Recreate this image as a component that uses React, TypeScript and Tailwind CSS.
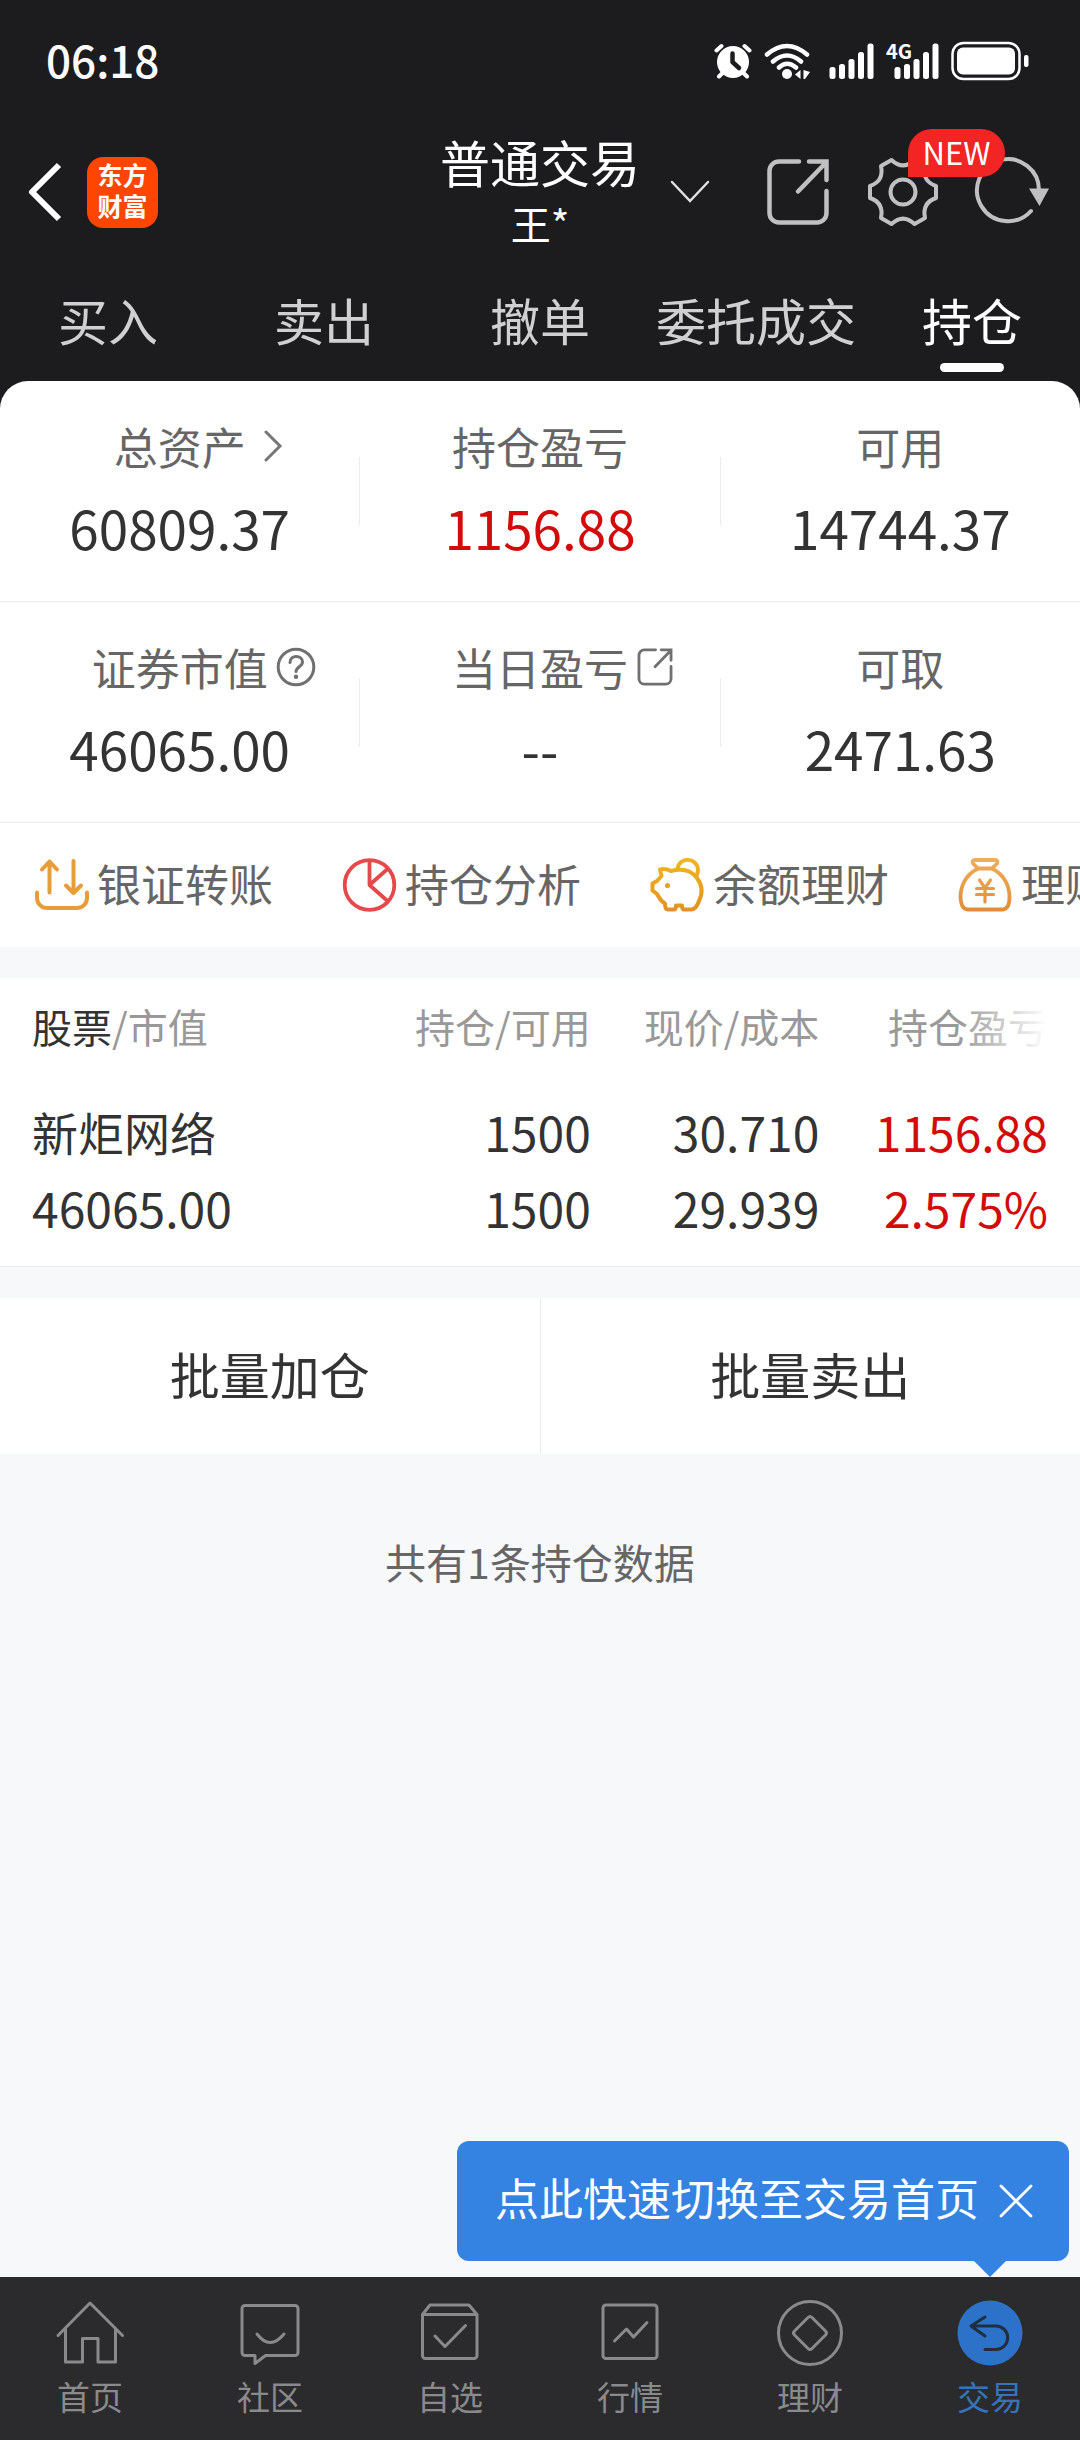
import { useState } from "react";
import type { ReactNode } from "react";

const tabs = ["买入", "卖出", "撤单", "委托成交", "持仓"];

const holdings = [
  {
    name: "新炬网络",
    marketValue: "46065.00",
    position: "1500",
    available: "1500",
    price: "30.710",
    cost: "29.939",
    profit: "1156.88",
    profitRate: "2.575%",
  },
];

/* ---------- Status bar icons ---------- */

const AlarmIcon = () => (
  <svg className="h-9 w-[38px]" viewBox="0 0 38 36" fill="none" strokeLinecap="round">
    <circle cx="19" cy="19" r="16" fill="#fff" />
    <path d="M2.5 7.5 7.5 3M35.5 7.5 30.5 3M5 33.5l4-4M33 33.5l-4-4" stroke="#fff" strokeWidth="4" />
    <path d="M18.5 10.5V19l6.5 6" stroke="#1c1c1e" strokeWidth="4.5" strokeLinejoin="round" />
  </svg>
);

const WifiIcon = () => (
  <svg className="h-9 w-12" viewBox="0 0 48 36" fill="none">
    <path
      d="M4 11.5Q24-5.5 44 11.5M10 18.5Q24 6.5 38 18.5M16 24.5Q24 17 33 24.5"
      stroke="#fff"
      strokeWidth="4.5"
      strokeLinecap="round"
    />
    <circle cx="24" cy="31" r="5" fill="#fff" />
    <path d="M32 31.5 37.5 27v9zM40.5 27l6.500 2-5 7h-1.500z" fill="#fff" />
  </svg>
);

const SignalIcon = () => (
  <svg className="h-9 w-[45px]" viewBox="0 0 45 36" fill="#fff">
    <rect x="0.5" y="24" width="6" height="12" rx="2.5" />
    <rect x="10" y="21" width="6" height="15" rx="2.5" />
    <rect x="19.5" y="16" width="6" height="20" rx="2.5" />
    <rect x="29" y="9" width="6" height="27" rx="2.5" />
    <rect x="38.5" y="0.5" width="6" height="35.5" rx="2.5" />
  </svg>
);

const BatteryIcon = () => (
  <svg className="h-10 w-[78px]" viewBox="0 0 78 40" fill="none">
    <rect x="1.5" y="2" width="67" height="36" rx="11" stroke="#fff" strokeWidth="2.5" />
    <rect x="6" y="6.5" width="58" height="27" rx="6" fill="#fff" />
    <rect x="73" y="14" width="4.5" height="12" rx="2" fill="#fff" />
  </svg>
);

/* ---------- Header icons ---------- */

const ShareIcon = ({ className, strokeWidth }: { className: string; strokeWidth: number }) => (
  <svg
    className={className}
    viewBox="0 0 64 70"
    fill="none"
    stroke="currentColor"
    strokeWidth={strokeWidth}
    strokeLinecap="round"
  >
    <path d="M33 4.5H13A9.5 9.5 0 0 0 3.5 14v42a9.5 9.5 0 0 0 9.5 9.5h38a9.5 9.5 0 0 0 9.5-9.5V34" />
    <path d="M43 4.5h17.5V23M32 34.5l28-29" />
  </svg>
);

const GearIcon = () => (
  <svg
    className="h-[72px] w-[72px]"
    viewBox="-36 -36 72 72"
    fill="none"
    stroke="currentColor"
    strokeWidth="4"
    strokeLinejoin="round"
  >
    <path d="M-33-6V6C-24 9-20 16-22 26L-11.5 32C-4 25 4 25 11.5 32L22 26C20 16 24 9 33 6V-6C24-9 20-16 22-26L11.5-32C4-25-4-25-11.5-32L-22-26C-20-16-24-9-33-6Z" />
    <circle r="12.5" />
  </svg>
);

const RefreshIcon = () => (
  <svg className="h-[72px] w-[76px]" viewBox="0 0 76 72" fill="none">
    <path d="M57 55A31 31 0 1 1 65 35" stroke="currentColor" strokeWidth="4" strokeLinecap="round" />
    <path d="M55 32.5h20L65.5 50z" fill="currentColor" />
  </svg>
);

/* ---------- Shortcuts ---------- */

const TransferIcon = () => (
  <svg
    className="h-[60px] w-[60px]"
    viewBox="0 0 60 60"
    fill="none"
    stroke="#e79d3c"
    strokeWidth="4"
    strokeLinecap="round"
    strokeLinejoin="round"
  >
    <path d="M17.5 37.5v-31M10 14.5l7.5-8 7.5 8M41.5 6v31.5M34 30.5l7.5 7.5 7.5-7.5" />
    <path d="M5 37.5V43a10 10 0 0 0 10 10h30a10 10 0 0 0 10-10v-5.5" />
  </svg>
);

const PieIcon = () => (
  <svg
    className="h-[60px] w-[60px]"
    viewBox="0 0 60 60"
    fill="none"
    stroke="#e54a4b"
    strokeWidth="3.8"
    strokeLinejoin="round"
  >
    <circle cx="29.5" cy="30" r="24.8" />
    <path d="M29.5 5.5V30l18-16M29.5 30l18 16" />
  </svg>
);

const PiggyIcon = () => (
  <svg
    className="h-[60px] w-[60px]"
    viewBox="0 0 60 60"
    fill="none"
    stroke="url(#piggy)"
    strokeWidth="4"
    strokeLinejoin="round"
  >
    <defs>
      <linearGradient id="piggy" x1="0" y1="0" x2="0" y2="60" gradientUnits="userSpaceOnUse">
        <stop offset="0" stopColor="#f0b822" />
        <stop offset="1" stopColor="#e18f24" />
      </linearGradient>
    </defs>
    <path d="M12 14.5Q17 13 23 16C33 13.5 43 15 49 23 55 31 54.5 39 51 46Q48 54.5 43 54.5H36Q34 54.5 34 50.5H28Q28 54.5 26 54.5H20Q17 54.5 17 48.5C12 46 11 42 9 39L4.5 35.5V28.5L9 26 13.5 21Z" />
    <path d="M29.5 14C31 1.5 49 2 50 14.5Q50 18 48.5 21" />
    <circle cx="19.5" cy="30.5" r="2.6" fill="#e6a422" stroke="none" />
  </svg>
);

const MoneyBagIcon = () => (
  <svg
    className="h-[60px] w-[60px]"
    viewBox="0 0 60 60"
    fill="none"
    stroke="url(#bag)"
    strokeWidth="3.8"
    strokeLinecap="round"
    strokeLinejoin="round"
  >
    <defs>
      <linearGradient id="bag" x1="0" y1="0" x2="0" y2="60" gradientUnits="userSpaceOnUse">
        <stop offset="0" stopColor="#efb05c" />
        <stop offset="1" stopColor="#e28a35" />
      </linearGradient>
    </defs>
    <path d="M22 13.5 17 8.5Q15.5 5 19 5H39Q42.5 5 41 8.5L36 13.5Z" />
    <path d="M22 13.5C9 20 4.5 32 4.5 42Q5 54.5 12 54.5H46Q53.5 54.5 53.5 42C53.5 32 49 20 36 13.5" />
    <path d="M23.5 25l5.5 8 5.5-8M29 33v14M20.5 33.5h17M20.5 39.5h17" strokeWidth="3.2" />
  </svg>
);

const shortcuts = [
  { label: "银证转账", icon: <TransferIcon /> },
  { label: "持仓分析", icon: <PieIcon /> },
  { label: "余额理财", icon: <PiggyIcon /> },
  { label: "理财", icon: <MoneyBagIcon /> },
];

/* ---------- Bottom navigation ---------- */

const NavIcon = ({ children }: { children: ReactNode }) => (
  <svg
    className="h-[72px] w-[72px]"
    viewBox="0 0 72 72"
    fill="none"
    stroke="currentColor"
    strokeWidth="3"
    strokeLinecap="round"
    strokeLinejoin="round"
  >
    {children}
  </svg>
);

const navItems = [
  {
    label: "首页",
    icon: <path d="M4 38.5 36 6l32.5 32.5M11.5 32v33h17V41.5H44V65h17.5V32" />,
  },
  {
    label: "社区",
    icon: (
      <>
        <path d="M11 8.5h50a3 3 0 0 1 3 3v44a3 3 0 0 1-3 3H31.5L21 66.5v-8H11a3 3 0 0 1-3-3v-44a3 3 0 0 1 3-3z" />
        <path d="M23 37q13 17 27 0" />
      </>
    ),
  },
  {
    label: "自选",
    icon: (
      <>
        <path d="M8.5 17.5 16 8h39l8 9.5v41a3 3 0 0 1-3 3H11.5a3 3 0 0 1-3-3zM8.5 17.5H63" />
        <path d="m21 39 10 10.5 20.5-21" />
      </>
    ),
  },
  {
    label: "行情",
    icon: (
      <>
        <rect x="9" y="8" width="54" height="53.5" rx="3" />
        <path d="m20.5 44 12-12 7 8L53 25.5" />
      </>
    ),
  },
  {
    label: "理财",
    icon: (
      <>
        <circle cx="36" cy="36" r="31.5" />
        <path d="M34 20.5q2-2 4 0L51.5 34q2 2 0 4L38 51.5q-2 2-4 0L20.5 38q-2-2 0-4z" />
      </>
    ),
  },
  {
    label: "交易",
    icon: (
      <>
        <circle cx="36" cy="36" r="32.5" fill="#2b72c8" stroke="none" />
        <path d="M31 20 17 29l14 10M17.5 29H42a11.7 11.7 0 0 1 0 23.4H31" stroke="#202e3f" />
      </>
    ),
  },
];

type StatProps = {
  label: string;
  value: string;
  red?: boolean;
  children?: ReactNode;
};

const Stat = ({ label, value, red, children }: StatProps) => (
  <div className="flex-1 pt-[35px] pb-[38px]">
    <div className="grid grid-cols-[1fr_auto_1fr] items-center">
      <span className="col-start-2 text-[44px] leading-[60px] text-[#666]">{label}</span>
      {children}
    </div>
    <div className={`mt-[15px] text-center text-[53px] leading-[72px] ${red ? "text-[#d40b0b]" : "text-[#333]"}`}>
      {value}
    </div>
  </div>
);

const StatDivider = () => <span className="h-[69px] w-px self-center bg-[#ececec]" />;

export default function App() {
  const [activeTab, setActiveTab] = useState("持仓");
  const [activeNav, setActiveNav] = useState("交易");
  const [showTip, setShowTip] = useState(true);

  return (
    <div
      lang="zh-CN"
      className="flex min-h-screen flex-col overflow-x-hidden bg-[#f6f8fa] font-['Noto_Sans_CJK_SC',sans-serif] text-[#333]"
    >
      <header className="bg-[#1c1c1e] text-white">
        {/* Status bar */}
        <div className="flex h-[122px] items-center justify-between pr-[51px] pl-[46px]">
          <span className="pb-1 text-[44px] leading-[60px] font-medium">06:18</span>
          <div className="flex items-center">
            <AlarmIcon />
            <span className="ml-[11px]">
              <WifiIcon />
            </span>
            <span className="ml-[18px]">
              <SignalIcon />
            </span>
            <span className="relative ml-3 pl-2">
              <SignalIcon />
              <span className="absolute -top-1 left-0 text-[20px] leading-6 font-bold">4G</span>
            </span>
            <span className="ml-3">
              <BatteryIcon />
            </span>
          </div>
        </div>

        {/* Account bar */}
        <div className="grid h-[140px] grid-cols-[1fr_auto_1fr] items-center">
          <div className="flex items-center gap-[23px] pl-6">
            <button type="button" aria-label="返回">
              <svg className="h-[60px] w-10" viewBox="0 0 40 60" fill="none" stroke="#fff" strokeWidth="6">
                <path d="M35 3 8 30l27 27" strokeLinejoin="round" />
              </svg>
            </button>
            <div className="flex h-[71px] w-[71px] items-center justify-center rounded-2xl bg-[#ff4500] pb-1 text-center text-[25px] leading-[31px] font-bold">
              东方
              <br />
              财富
            </div>
          </div>
          <div className="text-center">
            <h1 className="text-[50px] leading-[62px]">普通交易</h1>
            <p className="text-[40px] leading-[62px]">王*</p>
          </div>
          <div className="flex items-center pl-[30px] text-[#c0c0c0]">
            <button type="button" aria-label="切换账户">
              <svg
                className="h-6 w-10"
                viewBox="0 0 40 24"
                fill="none"
                stroke="#e0e0e0"
                strokeWidth="2.5"
                strokeLinecap="round"
              >
                <path d="M2 2l18 19L38 2" />
              </svg>
            </button>
            <button type="button" aria-label="分享" className="ml-14">
              <ShareIcon className="h-[70px] w-16" strokeWidth={4.5} />
            </button>
            <button type="button" aria-label="设置" className="relative z-10 ml-[37px]">
              <GearIcon />
              <span className="absolute -top-[27px] left-[41px] flex h-12 w-[97px] items-center justify-center rounded-3xl rounded-bl-none bg-[#f22424] pb-[3px] text-[31px] leading-10 text-white">
                NEW
              </span>
            </button>
            <button type="button" aria-label="刷新" className="ml-[35px]">
              <RefreshIcon />
            </button>
          </div>
        </div>

        {/* Trade tabs */}
        <nav className="flex">
          {tabs.map((tab) => (
            <button
              key={tab}
              type="button"
              onClick={() => setActiveTab(tab)}
              className={`flex flex-1 basis-0 flex-col items-center pt-[27px] pb-[9px] text-[50px] leading-[60px] whitespace-nowrap ${
                activeTab === tab ? "text-white" : "text-[#d0d0d0]"
              }`}
            >
              {tab}
              <span className={`mt-[14px] h-[9px] w-16 rounded-full ${activeTab === tab ? "bg-white" : ""}`} />
            </button>
          ))}
        </nav>
      </header>

      {/* Asset summary */}
      <section className="bg-[#1c1c1e]">
        <div className="rounded-t-[28px] bg-white">
          <div className="flex border-b border-[#ececec]">
            <Stat label="总资产" value="60809.37">
              <svg
                className="ml-[18px] h-8 w-5"
                viewBox="0 0 20 32"
                fill="none"
                stroke="#777"
                strokeWidth="3"
                strokeLinecap="round"
              >
                <path d="M2 2l14 14L2 30" />
              </svg>
            </Stat>
            <StatDivider />
            <Stat label="持仓盈亏" value="1156.88" red />
            <StatDivider />
            <Stat label="可用" value="14744.37" />
          </div>
          <div className="flex border-b border-[#ececec]">
            <Stat label="证券市值" value="46065.00">
              <svg
                className="ml-2 h-10 w-10"
                viewBox="0 0 40 40"
                fill="none"
                stroke="#707070"
                strokeWidth="3"
                strokeLinecap="round"
              >
                <circle cx="20" cy="20" r="17.8" />
                <path d="M14 15.5c0-8.5 12.5-7.5 12.5-.5 0 4.5-6.5 5-6.5 9.5" />
                <circle cx="20" cy="29.8" r="2.2" fill="#707070" stroke="none" />
              </svg>
            </Stat>
            <StatDivider />
            <Stat label="当日盈亏" value="--">
              <ShareIcon className="ml-[9px] h-10 w-9 text-[#707070]" strokeWidth={5} />
            </Stat>
            <StatDivider />
            <Stat label="可取" value="2471.63" />
          </div>
        </div>
      </section>

      {/* Shortcuts, scrolls sideways */}
      <section className="flex h-[124px] items-center gap-[67px] overflow-hidden bg-white pl-8">
        {shortcuts.map((item) => (
          <button key={item.label} type="button" className="flex shrink-0 items-center gap-[5px]">
            {item.icon}
            <span className="pb-1 text-[44px] leading-[60px] text-[#666]">{item.label}</span>
          </button>
        ))}
      </section>

      {/* Holdings */}
      <section className="mt-[31px] border-b border-[#ececec] bg-white px-8">
        <table className="w-full table-fixed text-right">
          <thead>
            <tr className="h-[100px] text-[40px] leading-[60px] whitespace-nowrap text-[#999]">
              <th className="w-[27.5%] pb-1 text-left font-normal">
                <span className="text-[#333]">股票</span>/市值
              </th>
              <th className="w-[27.5%] pb-1 font-normal">持仓/可用</th>
              <th className="w-[22.5%] pb-1 font-normal">现价/成本</th>
              <th className="relative w-[22.5%] pb-1 font-normal">
                持仓盈亏
                <span className="absolute inset-y-0 right-0 w-[90px] bg-gradient-to-r from-transparent to-white" />
              </th>
            </tr>
          </thead>
          <tbody>
            {holdings.map((item) => (
              <tr key={item.name} className="text-[48px] leading-[76px]">
                <td className="pt-[15px] pb-[21px] text-left">
                  <div className="text-[46px]">{item.name}</div>
                  <div>{item.marketValue}</div>
                </td>
                <td className="pt-[15px] pb-[21px]">
                  <div>{item.position}</div>
                  <div>{item.available}</div>
                </td>
                <td className="pt-[15px] pb-[21px]">
                  <div>{item.price}</div>
                  <div>{item.cost}</div>
                </td>
                <td className="pt-[15px] pb-[21px] text-[#d40b0b]">
                  <div>{item.profit}</div>
                  <div>{item.profitRate}</div>
                </td>
              </tr>
            ))}
          </tbody>
        </table>
      </section>

      <section className="mt-[31px] flex bg-white text-[50px] leading-[72px]">
        <button type="button" className="flex-1 border-r border-[#ececec] pt-[39px] pb-[45px]">
          批量加仓
        </button>
        <button type="button" className="flex-1 pt-[39px] pb-[45px]">
          批量卖出
        </button>
      </section>

      <p className="mt-[77px] text-center text-[41px] leading-[60px] text-[#666]">
        共有{holdings.length}条持仓数据
      </p>

      {/* Bottom navigation */}
      <footer className="relative mt-auto">
        {showTip && (
          <div className="absolute right-[11px] bottom-full mb-4 flex h-[120px] items-center rounded-xl bg-[#3482e2] pr-9 pl-[38px] text-white">
            <span className="pb-2 text-[44px] leading-[60px] whitespace-nowrap">点此快速切换至交易首页</span>
            <button type="button" aria-label="关闭" className="ml-5" onClick={() => setShowTip(false)}>
              <svg
                className="h-[34px] w-[34px]"
                viewBox="0 0 34 34"
                fill="none"
                stroke="#fff"
                strokeWidth="2.8"
                strokeLinecap="round"
              >
                <path d="M2 2l30 30M32 2 2 32" />
              </svg>
            </button>
            <svg className="absolute top-full right-[63px] h-4 w-8" viewBox="0 0 32 16" fill="#3482e2">
              <path d="M0 0h32L16 16z" />
            </svg>
          </div>
        )}
        <nav className="flex bg-[#2b2b2d]">
          {navItems.map((item) => (
            <button
              key={item.label}
              type="button"
              onClick={() => setActiveNav(item.label)}
              className={`flex flex-1 flex-col items-center pt-5 pb-[22px] ${
                activeNav === item.label ? "text-[#3573ba]" : "text-[#8a8a8d]"
              }`}
            >
              <NavIcon>{item.icon}</NavIcon>
              <span className="mt-[5px] text-[33px] leading-[44px]">{item.label}</span>
            </button>
          ))}
        </nav>
      </footer>
    </div>
  );
}
